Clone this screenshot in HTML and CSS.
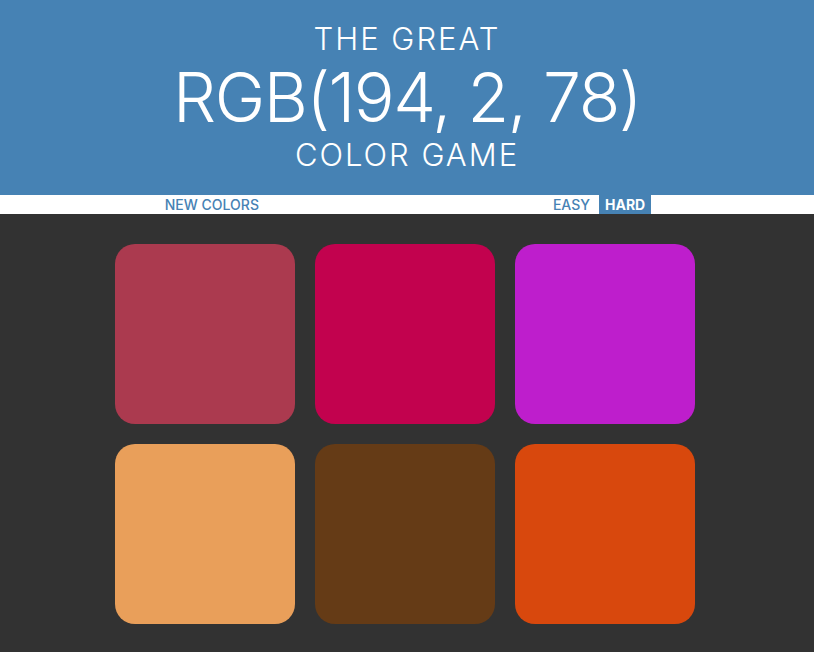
FILE: index.html
```html
<!DOCTYPE html>
<html lang="en">
<head>
<meta charset="utf-8">
<title>Color Game</title>
<link rel="stylesheet" href="styles.css">
</head>
<body>
<h1 class="title">
  <span class="title-line">The Great</span>
  <span class="title-rgb">RGB(194, 2, 78)</span>
  <span class="title-line title-last">Color Game</span>
</h1>
<div class="stripe">
  <button class="btn btn-reset">New Colors</button>
  <span class="message"></span>
  <button class="btn btn-easy">Easy</button>
  <button class="btn selected">Hard</button>
</div>
<div class="board">
  <div class="square sq1"></div>
  <div class="square sq2"></div>
  <div class="square sq3"></div>
  <div class="square sq4"></div>
  <div class="square sq5"></div>
  <div class="square sq6"></div>
</div>
</body>
</html>
```
FILE: styles.css
```css
html, body {
  margin: 0;
  padding: 0;
  height: 100%;
}
body {
  background: #323232;
  font-family: "Inter", "Open Sans", sans-serif;
}
.title {
  margin: 0;
  background: #4682b4;
  color: #fff;
  text-align: center;
  text-transform: uppercase;
  font-weight: 300;
  padding: 17px 0 18px;
}
.title-line {
  display: block;
  font-size: 31px;
  line-height: 44px;
  letter-spacing: 2px;
}
.title-rgb {
  display: block;
  font-size: 68px;
  line-height: 72px;
  letter-spacing: -1.5px;
}
.stripe {
  background: #fff;
  height: 19px;
  display: flex;
  justify-content: center;
  align-items: stretch;
  padding-right: 4px;
}
.btn {
  border: none;
  background: #fff;
  color: #4682b4;
  font-family: "Inter", "Open Sans", sans-serif;
  font-size: 14px;
  font-weight: 500;
  text-transform: uppercase;
  padding: 1px 6px 0;
  margin: 0;
  line-height: 18px;
}
.message {
  width: 282px;
}
.btn-easy {
  margin-right: 3px;
}
.btn.selected {
  background: #4682b4;
  color: #fff;
  font-weight: 700;
}
.board {
  display: grid;
  grid-template-columns: repeat(3, 180px);
  gap: 20px;
  justify-content: center;
  padding: 30px 4px 0 0;
}
.square {
  height: 180px;
  border-radius: 20px;
}
.sq1 { background: #ab3a4f; }
.sq2 { background: #c2024e; }
.sq3 { background: #be1ecc; }
.sq4 { background: #e99f5a; }
.sq5 { background: #653b16; }
.sq6 { background: #d8480d; }
```
